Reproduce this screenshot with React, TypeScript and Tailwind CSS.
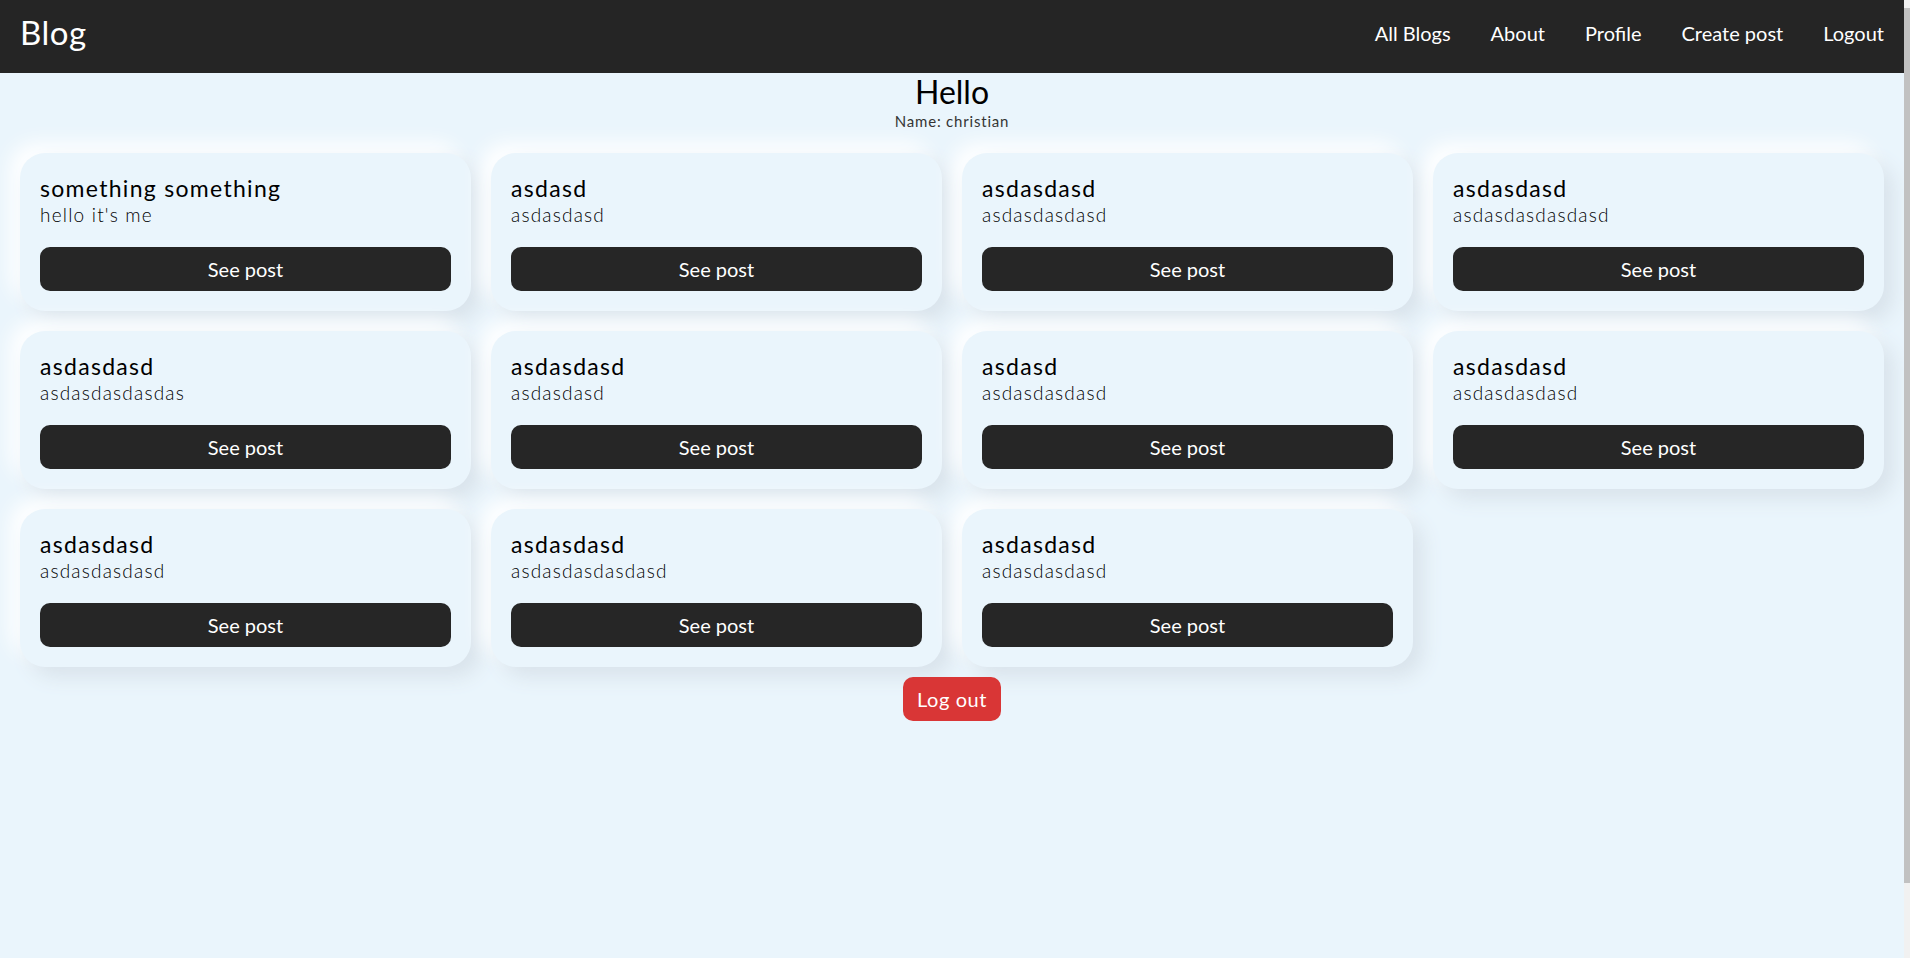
import React from "react";

type Post = { title: string; body: string };

const posts: Post[] = [
  { title: "something something", body: "hello it's me" },
  { title: "asdasd", body: "asdasdasd" },
  { title: "asdasdasd", body: "asdasdasdasd" },
  { title: "asdasdasd", body: "asdasdasdasdasd" },
  { title: "asdasdasd", body: "asdasdasdasdas" },
  { title: "asdasdasd", body: "asdasdasd" },
  { title: "asdasd", body: "asdasdasdasd" },
  { title: "asdasdasd", body: "asdasdasdasd" },
  { title: "asdasdasd", body: "asdasdasdasd" },
  { title: "asdasdasd", body: "asdasdasdasdasd" },
  { title: "asdasdasd", body: "asdasdasdasd" },
];

const links = ["All Blogs", "About", "Profile", "Create post", "Logout"];

const PostCard: React.FC<{ post: Post }> = ({ post }) => (
  <div className="flex flex-col p-5 rounded-[25px] bg-[#eaf5fc] shadow-[10px_10px_20px_#d9e3eb,-10px_-10px_20px_#ffffff]">
    <div className="text-[23px] leading-[31px] tracking-[1.3px] text-black">
      {post.title}
    </div>
    <div className="text-[19px] leading-[22px] tracking-[1.2px] font-light text-black">
      {post.body}
    </div>
    <button className="mt-[21px] h-[44px] w-full rounded-[10px] bg-[#262626] text-[20px] text-white">
      See post
    </button>
  </div>
);

export default function App() {
  return (
    <div className="flex h-[958px] w-full overflow-hidden bg-[#eaf5fc] font-['Lato','Open_Sans',sans-serif]">
      <div className="flex flex-1 flex-col">
        <nav className="flex h-[73px] shrink-0 items-center justify-between bg-[#252525] px-5 pb-[8px] text-white">
          <div className="text-[33px] leading-none tracking-[0.5px]">Blog</div>
          <div className="flex gap-10 text-[20px]">
            {links.map((l) => (
              <a key={l} className="cursor-pointer">
                {l}
              </a>
            ))}
          </div>
        </nav>

        <div className="flex flex-col items-center">
          <h1 className="text-[32px] leading-[38px] text-black">Hello</h1>
          <p className="mt-[2px] text-[15px] leading-[17px] tracking-[0.8px] text-[#333]">
            Name: christian
          </p>
        </div>

        <div className="mt-[23px] grid grid-cols-4 gap-5 px-5">
          {posts.map((p, i) => (
            <PostCard key={i} post={p} />
          ))}
        </div>

        <div className="mt-[10px] flex justify-center">
          <button className="h-[44px] rounded-[10px] bg-[#d93636] px-[14px] text-[20px] tracking-[0.6px] text-white">
            Log out
          </button>
        </div>
      </div>

      {/* scrollbar strip */}
      <div className="flex w-[6px] flex-col bg-[#f1f1f1]">
        <div className="mt-[8px] h-[875px] bg-[#c1c1c1]" />
      </div>
    </div>
  );
}
